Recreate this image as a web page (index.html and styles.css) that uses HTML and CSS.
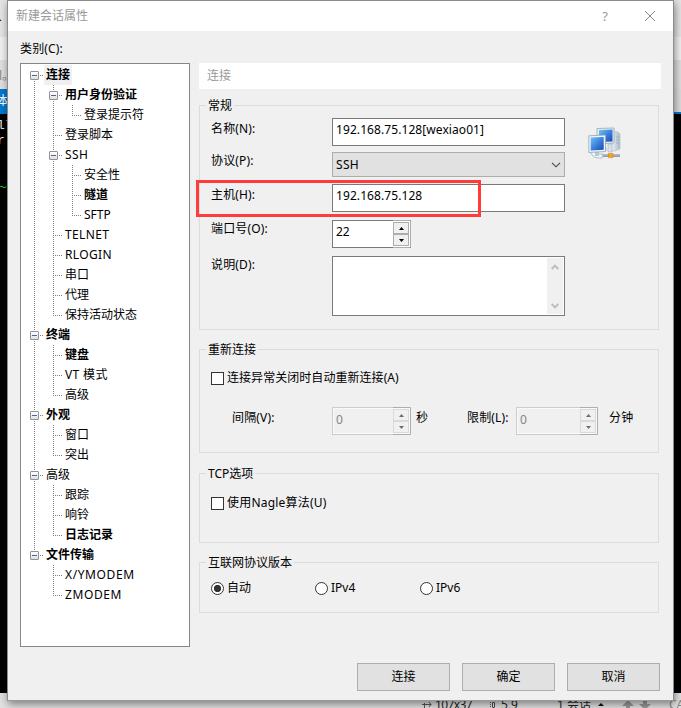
FILE: index.html
```html
<!DOCTYPE html>
<html lang="zh-CN">
<head>
<meta charset="utf-8">
<title>新建会话属性</title>
<link rel="stylesheet" href="styles.css">
</head>
<body>
<div class="app">
  <div class="strip menu"><span>▸</span></div>
  <div class="strip tools"></div>
  <div class="strip address"><span>l。</span></div>
  <div class="strip tabs"><span>本</span></div>
  <div class="terminal"><div>ll</div><div>r.</div><div class="tilde">~</div></div>
  <div class="status">
    <svg class="s-size" width="10" height="10" viewBox="0 0 10 10"><path d="M2.500 1v9M0 2.500h9M7 0l2 2.500L7 5" fill="none" stroke="#555"/></svg>
    <span class="s-dim">107x37</span>
    <svg class="s-pos" width="6" height="10" viewBox="0 0 6 10"><path d="M1.500 0v10" stroke="#555" stroke-dasharray="1 1"/><path d="M3.500 .5h2v5h-2z" fill="none" stroke="#555"/></svg>
    <span class="s-cur">5,9</span>
    <span class="s-ses">1 会话</span>
    <svg class="s-tri" width="6" height="6" viewBox="0 0 6 6"><path d="M0 4l3-3 3 3z" fill="#111"/></svg>
    <svg class="s-arr" width="30" height="12" viewBox="0 0 30 12"><path d="M6 0l6 6H8v6H4V6H0zM21 0h4v4h4l-6 6-6-6h4z" fill="#999"/></svg>
    <span class="s-cap">CA</span>
  </div>
</div>

<div class="dialog">
  <div class="titlebar">
    <span class="title">新建会话属性</span>
    <span class="help">?</span>
    <svg width="12" height="12" viewBox="0 0 12 12"><path d="M1 1l10 10M11 1L1 11" stroke="#8a8a8a" fill="none"/></svg>
  </div>
  <div class="category">类别(C):</div>
  <div class="main">
    <div class="tree">
      <div class="row"><i class="c first"><b></b></i><span class="bold sel">连接</span></div>
      <div class="row"><i class="c v"></i><i class="c node"><b></b></i><span class="bold">用户身份验证</span></div>
      <div class="row"><i class="c v"></i><i class="c v"></i><i class="c l"></i><span>登录提示符</span></div>
      <div class="row"><i class="c v"></i><i class="c t"></i><span>登录脚本</span></div>
      <div class="row"><i class="c v"></i><i class="c node"><b></b></i><span class="caps">SSH</span></div>
      <div class="row"><i class="c v"></i><i class="c v"></i><i class="c t"></i><span>安全性</span></div>
      <div class="row"><i class="c v"></i><i class="c v"></i><i class="c t"></i><span class="bold">隧道</span></div>
      <div class="row"><i class="c v"></i><i class="c v"></i><i class="c l"></i><span>SFTP</span></div>
      <div class="row"><i class="c v"></i><i class="c t"></i><span class="caps">TELNET</span></div>
      <div class="row"><i class="c v"></i><i class="c t"></i><span class="caps">RLOGIN</span></div>
      <div class="row"><i class="c v"></i><i class="c t"></i><span>串口</span></div>
      <div class="row"><i class="c v"></i><i class="c t"></i><span>代理</span></div>
      <div class="row"><i class="c v"></i><i class="c l"></i><span>保持活动状态</span></div>
      <div class="row"><i class="c node"><b></b></i><span class="bold">终端</span></div>
      <div class="row"><i class="c v"></i><i class="c t"></i><span class="bold">键盘</span></div>
      <div class="row"><i class="c v"></i><i class="c t"></i><span class="caps">VT 模式</span></div>
      <div class="row"><i class="c v"></i><i class="c l"></i><span>高级</span></div>
      <div class="row"><i class="c node"><b></b></i><span class="bold">外观</span></div>
      <div class="row"><i class="c v"></i><i class="c t"></i><span>窗口</span></div>
      <div class="row"><i class="c v"></i><i class="c l"></i><span>突出</span></div>
      <div class="row"><i class="c node"><b></b></i><span>高级</span></div>
      <div class="row"><i class="c v"></i><i class="c t"></i><span>跟踪</span></div>
      <div class="row"><i class="c v"></i><i class="c t"></i><span>响铃</span></div>
      <div class="row"><i class="c v"></i><i class="c l"></i><span class="bold">日志记录</span></div>
      <div class="row"><i class="c last"><b></b></i><span class="bold">文件传输</span></div>
      <div class="row"><i class="c"></i><i class="c t"></i><span class="modem">X/YMODEM</span></div>
      <div class="row"><i class="c"></i><i class="c l"></i><span class="modem">ZMODEM</span></div>
    </div>

    <div class="page">
      <div class="heading">连接</div>

      <div class="group general">
        <div class="legend">常规</div>
        <div class="general-body">
          <div class="form">
            <div class="field name"><label>名称(N):</label><div class="input">192.168.75.128[wexiao01]</div></div>
            <div class="field proto"><label>协议(P):</label><div class="combo">SSH<svg width="10" height="6" viewBox="0 0 10 6"><path d="M1 .8l4 4 4-4" fill="none" stroke="#444" stroke-width="1.100"/></svg></div></div>
            <div class="field host"><label>主机(H):</label><div class="input">192.168.75.128</div></div>
            <div class="field port"><label>端口号(O):</label>
              <div class="spin"><span>22</span><div class="arrows"><i><svg width="5" height="3" viewBox="0 0 5 3"><path d="M0 3L2.500 0 5 3z"/></svg></i><i><svg width="5" height="3" viewBox="0 0 5 3"><path d="M0 0l2.500 3L5 0z"/></svg></i></div></div>
            </div>
            <div class="field desc"><label>说明(D):</label>
              <div class="area"><div class="scroll">
                <svg width="8" height="6" viewBox="0 0 8 6"><path d="M.7 5L4 1.700 7.300 5" fill="none" stroke="#bcbcbc" stroke-width="1.900"/></svg>
                <svg width="8" height="6" viewBox="0 0 8 6"><path d="M.7 1L4 4.300 7.300 1" fill="none" stroke="#bcbcbc" stroke-width="1.900"/></svg>
              </div></div>
            </div>
          </div>
          <svg class="pcs" width="34" height="34" viewBox="0 0 34 34">
            <defs>
              <linearGradient id="scr" x1="0" y1="0" x2="1" y2="1"><stop offset="0" stop-color="#74c4f4"/><stop offset=".5" stop-color="#3d83dc"/><stop offset="1" stop-color="#1c45b4"/></linearGradient>
              <linearGradient id="case" x1="0" y1="0" x2="1" y2="0"><stop offset="0" stop-color="#f4f7fa"/><stop offset="1" stop-color="#a9bac8"/></linearGradient>
            </defs>
            <path d="M25 4l5 1 2 2v15l-5 2h-4z" fill="url(#case)" stroke="#b4c2ce" stroke-width=".6"/>
            <path d="M28 10h3M28 13h3M28 16h3" stroke="#8fa3b5" stroke-width=".6"/>
            <path d="M9 1.500l17-.5v15l-17 1z" fill="#e9f0f5" stroke="#8fa5b8" stroke-width=".8"/>
            <path d="M11 3l13.500-.5v12L11 15z" fill="url(#scr)"/>
            <path d="M20 17h4v8h-4z" fill="#d8e2ea" stroke="#93a6b6" stroke-width=".5"/>
            <path d="M18 20l3 4h-6z" fill="#d1dbe3"/>
            <path d="M3 26q2 6 11 5l1-4q-5 1-7-3" fill="#eff3f6" stroke="#a0b0bd" stroke-width=".8"/>
            <path d="M7 25h4v4H7z" fill="#b9c9d8"/>
            <path d="M.8 8.800L17.500 8v16.500L.8 25.500z" fill="#edf3f7" stroke="#8fa5b8" stroke-width=".8"/>
            <path d="M2.700 10.500l13-.6v12.800l-13 .8z" fill="url(#scr)"/>
            <path d="M15 28.500h17" stroke="#7b8b99" stroke-width="2.600"/><path d="M15 28h17" stroke="#cbd4db" stroke-width="1"/>
            <path d="M20.500 26.500h4.500v4.200h-4.500z" fill="#f4a321" stroke="#cf800b" stroke-width=".5"/>
          </svg>
        </div>
      </div>

      <div class="group reconnect">
        <div class="legend">重新连接</div>
        <div class="check"><i></i>连接异常关闭时自动重新连接(A)</div>
        <div class="limits">
          <label class="l1">间隔(V):</label>
          <div class="spin off"><span>0</span><div class="arrows"><i><svg width="5" height="3" viewBox="0 0 5 3"><path d="M0 3L2.500 0 5 3z"/></svg></i><i><svg width="5" height="3" viewBox="0 0 5 3"><path d="M0 0l2.500 3L5 0z"/></svg></i></div></div>
          <label class="l2">秒</label>
          <label class="l3">限制(L):</label>
          <div class="spin off wide"><span>0</span><div class="arrows"><i><svg width="5" height="3" viewBox="0 0 5 3"><path d="M0 3L2.500 0 5 3z"/></svg></i><i><svg width="5" height="3" viewBox="0 0 5 3"><path d="M0 0l2.500 3L5 0z"/></svg></i></div></div>
          <label class="l4">分钟</label>
        </div>
      </div>

      <div class="group tcp">
        <div class="legend">TCP选项</div>
        <div class="check nagle"><i></i>使用Nagle算法(U)</div>
      </div>

      <div class="group ip">
        <div class="legend">互联网协议版本</div>
        <div class="radios">
          <div class="check radio on"><i></i>自动</div>
          <div class="check radio"><i></i>IPv4</div>
          <div class="check radio"><i></i>IPv6</div>
        </div>
      </div>
    </div>
  </div>
  <div class="buttons"><div class="btn">连接</div><div class="btn">确定</div><div class="btn">取消</div></div>
  <div class="mark"></div>
</div>
</body>
</html>
```

FILE: styles.css
```css
* { box-sizing: border-box; }
body {
  margin: 0;
  width: 681px;
  height: 708px;
  position: relative;
  overflow: hidden;
  font: 12px/16px "Noto Sans", "Noto Sans CJK SC", sans-serif;
  color: #000;
}
svg { display: block; flex: none; }

/* Application window behind the dialog */
.app { display: flex; flex-direction: column; height: 708px; overflow: hidden; }
.strip { flex: none; overflow: hidden; white-space: nowrap; }
.menu { height: 37px; background: #e4e4e4; padding: 12px 0 0 0; font-size: 7px; }
.menu span { margin-left: -2px; }
.tools { height: 23px; background: #f0f0f0; }
.address { height: 29px; background: #dfdfdf; color: #888; padding: 8px 0 0 0; }
.address span { margin-left: -1px; }
.tabs { height: 25px; color: #fff; padding-top: 4px; background: linear-gradient(90deg, #0078d0 0 340px, transparent 340px), linear-gradient(#dcdcdc 23px, #0078d0 23px); }
.tabs span { margin-left: -3px; }
.terminal { height: 579px; background: #000; color: #e6e6e6; font: 13px/15px "Liberation Mono", monospace; padding-top: 4px; }
.terminal div { margin-left: -3px; }
.terminal .tilde { color: #2fd02f; margin: 32px 0 0 -1px; }
.status { height: 15px; background: #e0e0e0; display: flex; align-items: flex-start; white-space: nowrap; overflow: hidden; color: #222; padding: 4px 0 0 422px; }
.status span { flex: none; }
.status svg { margin-top: 5px; }
.s-dim { margin-left: 3px; width: 54px; letter-spacing: -.6px; }
.s-cur { margin-left: 6px; width: 56px; }
.s-ses { width: 41px; }
.status .s-tri { margin-left: 0; }
.status .s-arr { margin: 3px 0 0 18px; }
.s-cap { margin-left: 17px; color: #888; }

/* Dialog */
.dialog {
  position: absolute;
  left: 7px;
  top: 0;
  width: 667px;
  height: 701px;
  border: 1px solid #8c8c8c;
  border-bottom-color: #999;
  background: #f0f0f0;
  box-shadow: 1px 3px 8px rgba(0, 0, 0, .45);
}
.titlebar { height: 30px; background: #fff; display: flex; align-items: center; padding: 0 17px 0 8px; color: #999; }
.title { flex: 1; }
.help { margin-right: 36px; font-size: 13px; }
.category { height: 32px; padding: 10px 12px 0; letter-spacing: .15px; }
.main { display: flex; gap: 9px; padding-left: 12px; height: 584px; }

.tree { width: 170px; height: 584px; flex: none; background: #fff; border: 1px solid #828790; padding: 1px 0 0 4px; }
.row { display: flex; height: 20px; line-height: 20px; white-space: nowrap; }
.row span { padding: 0 2px; }
.bold { font-weight: 700; }
.caps { letter-spacing: .35px; }
.modem { letter-spacing: .6px; }
.sel { background: #f0f0f0; }
.c {
  --v: repeating-linear-gradient(180deg, #808080 0 1px, transparent 1px 2px);
  --h: repeating-linear-gradient(90deg, #808080 0 1px, transparent 1px 2px);
  width: 19px;
  height: 20px;
  flex: none;
}
.v { background: var(--v) 9px 0 / 1px 20px no-repeat; }
.t, .node { background: var(--v) 9px 0 / 1px 20px no-repeat, var(--h) 9px 10px / 9px 1px no-repeat; }
.l, .last { background: var(--v) 9px 0 / 1px 11px no-repeat, var(--h) 9px 10px / 9px 1px no-repeat; }
.first { background: var(--v) 9px 10px / 1px 10px no-repeat, var(--h) 9px 10px / 9px 1px no-repeat; }
.c b {
  display: block;
  width: 9px;
  height: 9px;
  margin: 6px 0 0 5px;
  border: 1px solid #919191;
  border-radius: 1px;
  background: linear-gradient(#4b63a7, #4b63a7) 1px 3px / 5px 1px no-repeat, linear-gradient(#fff, #e0e0e0);
}

.page { width: 462px; flex: none; }
.heading { height: 26px; background: #fff; color: #999; padding: 5px 8px; }
.group { width: 460px; border: 1px solid #dcdcdc; }
.legend { width: max-content; height: 16px; margin: -8px 0 0 6px; padding: 0 2px; background: #f0f0f0; white-space: nowrap; }
.general { height: 225px; margin-top: 16px; }
.reconnect { height: 104px; margin-top: 19px; }
.tcp { height: 70px; margin-top: 20px; }
.ip { height: 51px; margin-top: 19px; }

.general-body { display: flex; padding: 4px 0 0 11px; }
.form { width: 354px; flex: none; }
.field { display: flex; align-items: flex-start; }
.field label { width: 121px; flex: none; letter-spacing: .15px; }
.input, .area { width: 233px; border: 1px solid #7a7a7a; background: #fff; }
.input { height: 28px; padding: 3px 3px; letter-spacing: .08px; }
.name label, .host label { margin-top: 3px; }
.proto label, .port label, .desc label { margin-top: 1px; }
.proto { margin-top: 6px; }
.host { margin-top: 7px; }
.port, .desc { margin-top: 8px; }
.combo { width: 233px; height: 25px; border: 1px solid #adadad; background: #e1e1e1; display: flex; align-items: center; justify-content: space-between; padding: 0 3px; letter-spacing: .3px; }
.area { height: 60px; padding: 1px; display: flex; justify-content: flex-end; }
.scroll { width: 16px; background: #f0f0f0; display: flex; flex-direction: column; justify-content: space-between; align-items: center; padding: 6px 0 5px; }
.pcs { margin: 9px 0 0 23px; }

.spin { width: 79px; height: 28px; border: 1px solid #7a7a7a; border-right-color: #adadad; background: #fff; display: flex; justify-content: space-between; }
.spin span { padding: 3px; }
.arrows { width: 17px; margin: -1px 0; border: 1px solid #adadad; border-width: 1px 0; padding: 1px 1px 1px 0; display: flex; flex-direction: column; }
.arrows i { flex: 1; width: 16px; border: 1px solid #adadad; background: #f0f0f0; display: flex; align-items: center; justify-content: center; }
.off { border-color: #ccc; border-right-color: #adadad; background: #f0f0f0; color: #838383; box-shadow: inset 0 0 0 1px #fafafa; }
.off span { padding-top: 4px; }
.off .arrows i { border-color: #d9d9d9; }
.off svg { fill: #6d6d6d; }
.wide { width: 82px; }

.check { display: flex; align-items: center; gap: 3px; height: 16px; white-space: nowrap; }
.check i { width: 13px; height: 13px; flex: none; border: 1px solid #333; background: #fff; }
.reconnect .check { margin: 12px 0 0 11px; letter-spacing: .05px; }
.limits { display: flex; align-items: flex-start; margin: 21px 0 0 32px; white-space: nowrap; }
.limits label { margin-top: 3px; letter-spacing: .15px; }
.l1 { width: 100px; }
.l2 { width: 56px; padding-left: 5px; }
.l3 { width: 49px; }
.l4 { padding-left: 11px; }
.tcp .check { margin: 13px 0 0 11px; }
.nagle { letter-spacing: .2px; }
.radios { display: flex; margin: 9px 0 0 11px; }
.radio { width: 105px; }
.radio:first-child { width: 104px; }
.radio i { border-radius: 50%; }
.on i { background: radial-gradient(circle, #333 0 3.300px, #fff 4px); }

.buttons { display: flex; gap: 12px; padding: 16px 0 0 349px; }
.btn { width: 93px; height: 28px; border: 1px solid #adadad; background: #e1e1e1; line-height: 25px; text-align: center; }

/* Highlight around the host field */
.mark { position: absolute; left: 188px; top: 179px; width: 285px; height: 37px; border: 3px solid #ff3b3b; }
```
